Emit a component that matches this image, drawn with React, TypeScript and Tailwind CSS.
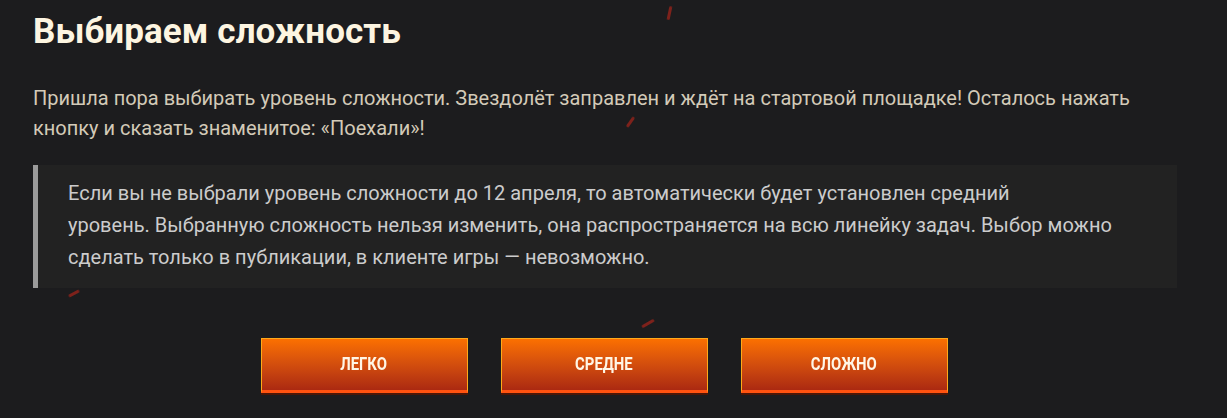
import React from 'react';

const sparks = [
  { cls: 'left-[668px] top-[6px] h-[14px] w-[3px] rotate-[12deg]' },
  { cls: 'left-[629px] top-[116px] h-[12px] w-[3px] rotate-[35deg]' },
  { cls: 'left-[68px] top-[292px] h-[3px] w-[12px] -rotate-[28deg]' },
  { cls: 'left-[641px] top-[322px] h-[3px] w-[14px] -rotate-[30deg]' },
];

const DifficultyButton: React.FC<{ label: string }> = ({ label }) => (
  <button className="flex h-[55px] w-[207px] items-center justify-center border border-[#ffa91a] border-b-[3px] border-b-[#ff5210] bg-gradient-to-b from-[#fb7000] to-[#ab2911] text-[17.5px] font-bold uppercase text-[#fff6e6] shadow-[0_2px_0_#4a1607]">
    <span className="inline-block scale-x-[0.85]">{label}</span>
  </button>
);

export default function App() {
  return (
    <div className="relative h-[418px] w-[1227px] overflow-hidden bg-[#1c1c1e] font-['Roboto',sans-serif]">
      {sparks.map((s, i) => (
        <span key={i} className={`absolute rounded-full bg-[#a8241a] opacity-70 blur-[0.5px] ${s.cls}`} />
      ))}
      <div className="relative px-[33px] pt-[10px]">
        <h1 className="text-[35px] font-bold leading-[44px] tracking-[0.1px] text-[#fdf5e1]">
          Выбираем сложность
        </h1>
        <p className="mt-[29px] w-[1150px] text-[20px] leading-[30px] text-[#d3cab8]">
          Пришла пора выбирать уровень сложности. Звездолёт заправлен и ждёт на стартовой площадке! Осталось нажать
          кнопку и сказать знаменитое: «Поехали»!
        </p>
        <div className="mt-[22px] w-[1144px] border-l-[5px] border-[#9b9b9b] bg-[#222222] pt-[12px] pb-[15px] pl-[30px] pr-[36px]">
          <p className="text-[20px] leading-[32px] text-[#cccccc]">
            Если вы не выбрали уровень сложности до 12 апреля, то автоматически будет установлен средний
            <br />
            уровень. Выбранную сложность нельзя изменить, она распространяется на всю линейку задач. Выбор можно
            сделать только в публикации, в клиенте игры — невозможно.
          </p>
        </div>
        <div className="mt-[50px] flex justify-center gap-[33px] pr-[19px]">
          <DifficultyButton label="Легко" />
          <DifficultyButton label="Средне" />
          <DifficultyButton label="Сложно" />
        </div>
      </div>
    </div>
  );
}
